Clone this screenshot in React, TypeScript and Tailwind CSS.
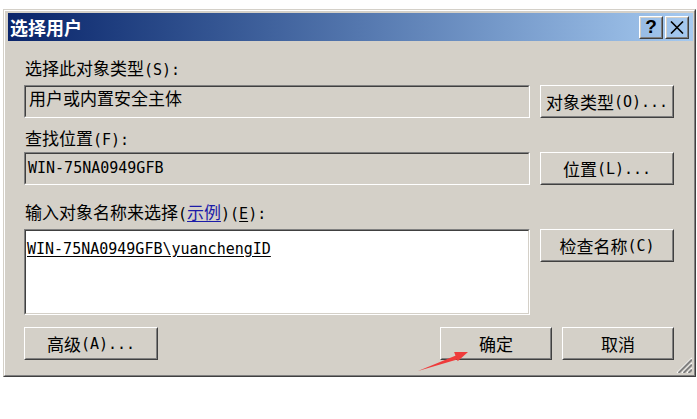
import React from "react";

const cjk = /([\u3000-\u9fff\uff00-\uffef]+)/;

// SimSun-ish look: CJK at full width, latin half width in a mono face
function T({ s }: { s: string }) {
  return (
    <>
      {s.split(cjk).map((p, i) =>
        p === "" ? null : cjk.test(p) ? (
          <span key={i} className="font-['Noto_Sans_CJK_SC'] text-[17px] leading-[20px]">{p}</span>
        ) : (
          <span key={i} className="font-['DejaVu_Sans_Mono'] text-[15px] leading-[20px]">{p}</span>
        )
      )}
    </>
  );
}

function Raised({ className = "", children }: { className?: string; children?: React.ReactNode }) {
  return (
    <div className={`border border-t-white border-l-white border-b-[#404040] border-r-[#404040] ${className}`}>
      <div className="flex h-full w-full items-center justify-center whitespace-pre border border-t-[#d4d0c8] border-l-[#d4d0c8] border-b-[#808080] border-r-[#808080] leading-[20px] text-black">
        {children}
      </div>
    </div>
  );
}

function Sunken({ className = "", inner = "", children }: { className?: string; inner?: string; children?: React.ReactNode }) {
  return (
    <div className={`border border-t-[#808080] border-l-[#808080] border-b-white border-r-white ${className}`}>
      <div className={`h-full w-full overflow-hidden border border-t-[#404040] border-l-[#404040] border-b-[#d4d0c8] border-r-[#d4d0c8] leading-[20px] text-black ${inner}`}>
        {children}
      </div>
    </div>
  );
}

export default function App() {
  return (
    <div className="relative h-[419px] w-[697px] overflow-hidden bg-white">
      <div className="ml-[3px] mt-[9px] h-[368px] w-[693px] border border-t-[#d4d0c8] border-l-[#d4d0c8] border-b-[#404040] border-r-[#404040]">
        <div className="relative h-full w-full border border-t-white border-l-white border-b-[#808080] border-r-[#808080] bg-[#d4d0c8] pl-[3px] pr-[1px] pt-[2px]">
          {/* title bar */}
          <div className="flex h-[28px] items-center justify-between bg-gradient-to-r from-[#0a246a] to-[#a6caf0] pl-[2px] pr-[4px]">
            <span className="font-['Noto_Sans_CJK_SC'] text-[18px] font-bold leading-[20px] text-white">选择用户</span>
            <div className="flex gap-[2px]">
              <Raised className="h-[23px] w-[24px]">
                <span className="font-['Liberation_Sans'] text-[19px] font-black leading-[20px]">?</span>
              </Raised>
              <Raised className="h-[23px] w-[24px]">
                <svg width="14" height="13" viewBox="0 0 14 13">
                  <path d="M1 0.5 L13 12.5 M13 0.5 L1 12.5" stroke="#000" strokeWidth="1.6" />
                </svg>
              </Raised>
            </div>
          </div>

          <div className="pl-[16px] text-black">
            <div className="mt-[17px] h-[20px] whitespace-pre pl-[1px] leading-[20px]"><T s="选择此对象类型(S):" /></div>
            <div className="mt-[7px] flex gap-[10px]">
              <Sunken className="h-[33px] w-[506px]" inner="bg-[#d4d0c8] px-[3px] pt-[1px]"><T s="用户或内置安全主体" /></Sunken>
              <Raised className="h-[33px] w-[134px]"><T s="对象类型(O)..." /></Raised>
            </div>

            <div className="mt-[10px] h-[20px] whitespace-pre pl-[1px] leading-[20px]"><T s="查找位置(F):" /></div>
            <div className="mt-[4px] flex gap-[10px]">
              <Sunken className="h-[33px] w-[506px]" inner="bg-[#d4d0c8] px-[2px] pt-[3px]"><T s="WIN-75NA0949GFB" /></Sunken>
              <Raised className="h-[33px] w-[134px]"><T s="位置(L)..." /></Raised>
            </div>

            <div className="mt-[17px] h-[20px] whitespace-pre pl-[1px] leading-[20px]">
              <T s="输入对象名称来选择(" />
              <span className="font-['Noto_Sans_CJK_SC'] text-[17px] leading-[20px] text-[#1c1ca8] underline underline-offset-2">示例</span>
              <T s=")(" />
              <span className="font-['DejaVu_Sans_Mono'] text-[15px] leading-[20px] underline underline-offset-2">E</span>
              <T s="):" />
            </div>
            <div className="mt-[7px] flex gap-[10px]">
              <Sunken className="h-[86px] w-[506px]" inner="bg-white px-[1px] pt-[7px]">
                <span className="font-['DejaVu_Sans_Mono'] text-[15px] leading-[20px] underline underline-offset-2">WIN-75NA0949GFB\yuanchengID</span>
              </Sunken>
              <Raised className="h-[33px] w-[134px]"><T s="检查名称(C)" /></Raised>
            </div>

            <div className="mt-[12px] flex">
              <Raised className="h-[33px] w-[134px]"><T s="高级(A)..." /></Raised>
              <Raised className="ml-[282px] h-[33px] w-[112px]"><T s="确定" /></Raised>
              <Raised className="ml-[10px] h-[33px] w-[112px]"><T s="取消" /></Raised>
            </div>
          </div>

          {/* size grip */}
          <svg className="absolute bottom-[2px] right-[2px]" width="18" height="18" viewBox="0 0 18 18">
            {[0, 5, 10].map((k) => (
              <g key={k}>
                <line x1={3 + k} y1="18" x2="18" y2={3 + k} stroke="#ffffff" strokeWidth="1.2" />
                <line x1={4.5 + k} y1="18" x2="18" y2={4.5 + k} stroke="#808080" strokeWidth="2" />
              </g>
            ))}
          </svg>
        </div>
      </div>

      {/* red annotation arrow */}
      <svg className="pointer-events-none absolute left-0 top-0" width="697" height="419" viewBox="0 0 697 419">
        <polygon points="418,371 456.5,355.2 458,359.3" fill="#ee3b3b" />
        <polygon points="468,352 454.1,352.1 457.7,361.3" fill="#ee3b3b" />
      </svg>
    </div>
  );
}
